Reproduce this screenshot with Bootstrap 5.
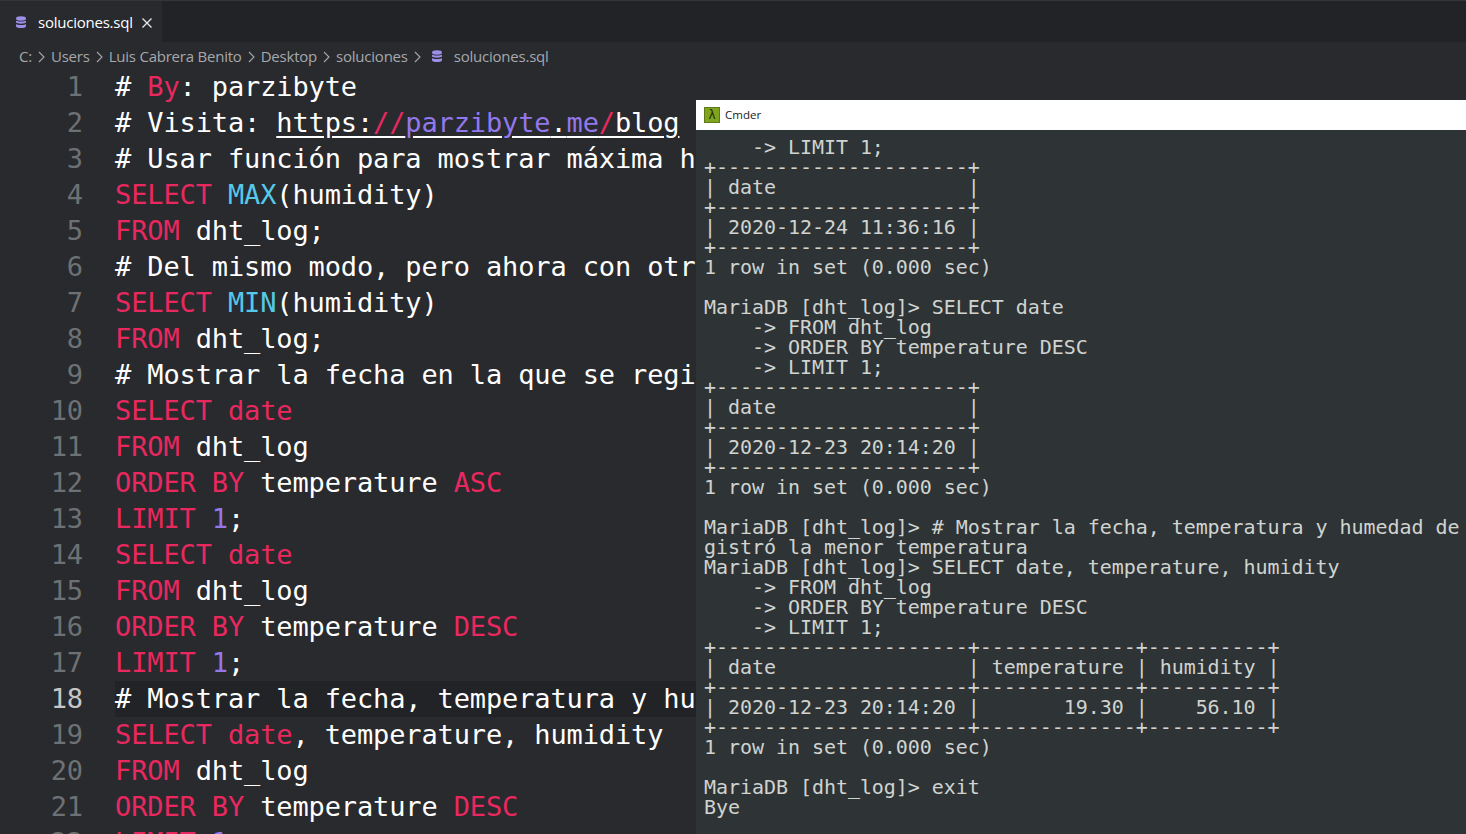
<!DOCTYPE html>
<html lang="es">
<head>
<meta charset="utf-8">
<title>soluciones.sql</title>
<link href="https://cdn.jsdelivr.net/npm/bootstrap@5.3.0/dist/css/bootstrap.min.css" rel="stylesheet">
<style>
html,body{height:100%;}
body{background:#282a2e;color:#fff;overflow:hidden;font-family:"Open Sans","Noto Sans",sans-serif;position:relative;}
.tabstrip{height:42px;background:#212327;border-top:1px solid #34363a;}
.filetab{background:#282a2e;height:41px;width:162px;padding:2px 0 0 15px;font-size:15px;letter-spacing:-.23px;color:#fff;}
.dbicon{margin-right:11px;flex:none;}
.crumbs{height:27px;padding:2px 0 0 19px;font-size:15px;letter-spacing:-.22px;color:#a6a8ab;}
.crumbs .chev{margin:0 6px 0 6px;}
.crumbs .dbicon{margin-left:4px;}
.editorpane{font-family:"DejaVu Sans Mono",monospace;font-size:27px;letter-spacing:-.13px;line-height:36px;}
.coderow{height:36px;white-space:pre;}
.gutter{width:83px;text-align:right;color:#6e7174;flex:none;margin-right:32px;}
.codeline{flex:1;}
.coderow.current .gutter{color:#c6c6c6;}
.coderow.current .codeline{background:#212327;}
.kw{color:#e8285f;}.fn{color:#56c8e8;}.num{color:#9378ec;}
.lnk{text-decoration:underline;text-underline-offset:4px;}
.cmderwin{position:absolute;left:696px;top:100px;width:770px;height:734px;background:#2e3336;}
.cmdertitle{height:30px;background:#fff;color:#222;font-size:11.5px;padding-left:8px;}
.lambda{width:16px;height:16px;background:#7fa51f;border:1px solid #5d7a16;color:#23300a;font-size:12px;line-height:14px;text-align:center;font-family:"DejaVu Sans",sans-serif;margin-right:5px;}
.termout{margin:0;padding:7px 0 0 8px;font-family:"DejaVu Sans Mono",monospace;font-size:20px;letter-spacing:-.05px;line-height:20px;color:#d0d3d0;overflow:hidden;white-space:pre;}
</style>
</head>
<body>
<div class="tabstrip d-flex">
  <div class="filetab d-flex align-items-center">
    <svg width="12" height="13" viewBox="0 0 12 13" class="dbicon"><g fill="#9c8fe8"><ellipse cx="6" cy="2.5" rx="5" ry="2.2"/><path d="M1 4.6c1 1.3 9 1.3 10 0v2c-1 1.4-9 1.4-10 0z"/><path d="M1 8c1 1.3 9 1.3 10 0v2.4c-1 2.1-9 2.1-10 0z"/></g></svg>
    <span>soluciones.sql</span>
    <svg width="12" height="12" viewBox="0 0 12 12" class="ms-2"><path d="M1.5 1.5l9 9M10.5 1.5l-9 9" stroke="#e8e8e8" stroke-width="1.3" fill="none"/></svg>
  </div>
</div>
<div class="crumbs d-flex align-items-center">
  <span>C:</span><svg class="chev" width="7" height="12" viewBox="0 0 7 12"><path d="M1 1l5 5-5 5" stroke="#a6a8ab" stroke-width="1.1" fill="none"/></svg>
  <span>Users</span><svg class="chev" width="7" height="12" viewBox="0 0 7 12"><path d="M1 1l5 5-5 5" stroke="#a6a8ab" stroke-width="1.1" fill="none"/></svg>
  <span>Luis Cabrera Benito</span><svg class="chev" width="7" height="12" viewBox="0 0 7 12"><path d="M1 1l5 5-5 5" stroke="#a6a8ab" stroke-width="1.1" fill="none"/></svg>
  <span>Desktop</span><svg class="chev" width="7" height="12" viewBox="0 0 7 12"><path d="M1 1l5 5-5 5" stroke="#a6a8ab" stroke-width="1.1" fill="none"/></svg>
  <span>soluciones</span><svg class="chev" width="7" height="12" viewBox="0 0 7 12"><path d="M1 1l5 5-5 5" stroke="#a6a8ab" stroke-width="1.1" fill="none"/></svg>
  <svg width="12" height="13" viewBox="0 0 12 13" class="dbicon"><g fill="#9c8fe8"><ellipse cx="6" cy="2.5" rx="5" ry="2.2"/><path d="M1 4.6c1 1.3 9 1.3 10 0v2c-1 1.4-9 1.4-10 0z"/><path d="M1 8c1 1.3 9 1.3 10 0v2.4c-1 2.1-9 2.1-10 0z"/></g></svg>
  <span>soluciones.sql</span>
</div>
<main class="editorpane">
<div class="coderow d-flex"><div class="gutter">1</div><div class="codeline"># <span class="kw">By</span>: parzibyte</div></div>
<div class="coderow d-flex"><div class="gutter">2</div><div class="codeline"># Visita: <span class="lnk">https:<span class="kw">//</span><span class="num">parzibyte</span>.<span class="num">me</span><span class="kw">/</span>blog</span></div></div>
<div class="coderow d-flex"><div class="gutter">3</div><div class="codeline"># Usar función para mostrar máxima h</div></div>
<div class="coderow d-flex"><div class="gutter">4</div><div class="codeline"><span class="kw">SELECT</span> <span class="fn">MAX</span>(humidity)</div></div>
<div class="coderow d-flex"><div class="gutter">5</div><div class="codeline"><span class="kw">FROM</span> dht_log;</div></div>
<div class="coderow d-flex"><div class="gutter">6</div><div class="codeline"># Del mismo modo, pero ahora con otr</div></div>
<div class="coderow d-flex"><div class="gutter">7</div><div class="codeline"><span class="kw">SELECT</span> <span class="fn">MIN</span>(humidity)</div></div>
<div class="coderow d-flex"><div class="gutter">8</div><div class="codeline"><span class="kw">FROM</span> dht_log;</div></div>
<div class="coderow d-flex"><div class="gutter">9</div><div class="codeline"># Mostrar la fecha en la que se regi</div></div>
<div class="coderow d-flex"><div class="gutter">10</div><div class="codeline"><span class="kw">SELECT date</span></div></div>
<div class="coderow d-flex"><div class="gutter">11</div><div class="codeline"><span class="kw">FROM</span> dht_log</div></div>
<div class="coderow d-flex"><div class="gutter">12</div><div class="codeline"><span class="kw">ORDER BY</span> temperature <span class="kw">ASC</span></div></div>
<div class="coderow d-flex"><div class="gutter">13</div><div class="codeline"><span class="kw">LIMIT</span> <span class="num">1</span>;</div></div>
<div class="coderow d-flex"><div class="gutter">14</div><div class="codeline"><span class="kw">SELECT date</span></div></div>
<div class="coderow d-flex"><div class="gutter">15</div><div class="codeline"><span class="kw">FROM</span> dht_log</div></div>
<div class="coderow d-flex"><div class="gutter">16</div><div class="codeline"><span class="kw">ORDER BY</span> temperature <span class="kw">DESC</span></div></div>
<div class="coderow d-flex"><div class="gutter">17</div><div class="codeline"><span class="kw">LIMIT</span> <span class="num">1</span>;</div></div>
<div class="coderow current d-flex"><div class="gutter">18</div><div class="codeline"># Mostrar la fecha, temperatura y hu</div></div>
<div class="coderow d-flex"><div class="gutter">19</div><div class="codeline"><span class="kw">SELECT date</span>, temperature, humidity</div></div>
<div class="coderow d-flex"><div class="gutter">20</div><div class="codeline"><span class="kw">FROM</span> dht_log</div></div>
<div class="coderow d-flex"><div class="gutter">21</div><div class="codeline"><span class="kw">ORDER BY</span> temperature <span class="kw">DESC</span></div></div>
<div class="coderow d-flex"><div class="gutter">22</div><div class="codeline"><span class="kw">LIMIT</span> <span class="num">1</span>;</div></div>
</main>
<section class="cmderwin d-flex flex-column">
  <div class="cmdertitle d-flex align-items-center"><div class="lambda">λ</div><span>Cmder</span></div>
<pre class="termout flex-grow-1">    -&gt; LIMIT 1;
+---------------------+
| date                |
+---------------------+
| 2020-12-24 11:36:16 |
+---------------------+
1 row in set (0.000 sec)

MariaDB [dht_log]&gt; SELECT date
    -&gt; FROM dht_log
    -&gt; ORDER BY temperature DESC
    -&gt; LIMIT 1;
+---------------------+
| date                |
+---------------------+
| 2020-12-23 20:14:20 |
+---------------------+
1 row in set (0.000 sec)

MariaDB [dht_log]&gt; # Mostrar la fecha, temperatura y humedad de
gistró la menor temperatura
MariaDB [dht_log]&gt; SELECT date, temperature, humidity
    -&gt; FROM dht_log
    -&gt; ORDER BY temperature DESC
    -&gt; LIMIT 1;
+---------------------+-------------+----------+
| date                | temperature | humidity |
+---------------------+-------------+----------+
| 2020-12-23 20:14:20 |       19.30 |    56.10 |
+---------------------+-------------+----------+
1 row in set (0.000 sec)

MariaDB [dht_log]&gt; exit
Bye</pre>
</section>
<script src="https://cdn.jsdelivr.net/npm/bootstrap@5.3.0/dist/js/bootstrap.bundle.min.js"></script>
</body>
</html>
